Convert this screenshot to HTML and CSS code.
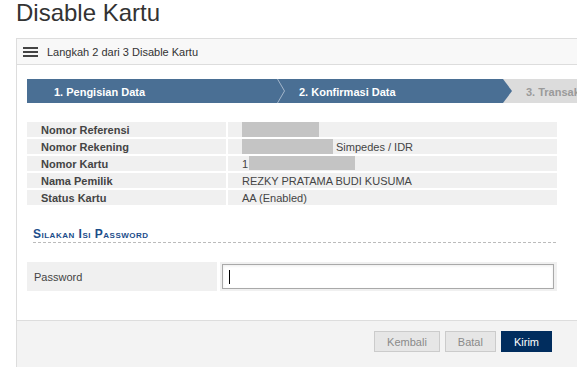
FILE: index.html
```html
<!DOCTYPE html>
<html lang="id">
<head>
    <meta charset="UTF-8">
    <meta name="viewport" content="width=device-width, initial-scale=1.0">
    <title>Disable Kartu</title>
    <link rel="stylesheet" href="styles.css">
</head>
<body>
    <h1 class="page-title">Disable Kartu</h1>

    <div class="panel">
        <div class="panel-head">
            <span class="menu-icon"><i></i><i></i><i></i></span>
            <span class="panel-head-text">Langkah 2 dari 3 Disable Kartu</span>
        </div>

        <div class="panel-body">
            <div class="steps">
                <div class="step step-done">1. Pengisian Data</div>
                <svg class="step-sep" width="8" height="24" viewBox="0 0 8 24">
                    <polyline points="0.5,0 7.5,12 0.5,24" fill="none" stroke="#a3b6ca" stroke-width="1"/>
                </svg>
                <div class="step step-active">2. Konfirmasi Data</div>
                <svg class="step-arrow" width="9" height="24" viewBox="0 0 9 24">
                    <polygon points="0,0 9,12 0,24" fill="#4a6f94"/>
                </svg>
                <div class="step step-todo">3. Transaksi Selesai</div>
            </div>

            <div class="info-table">
                <div class="info-label">Nomor Referensi</div>
                <div class="info-value"><span class="masked masked-ref"></span></div>

                <div class="info-label">Nomor Rekening</div>
                <div class="info-value"><span class="masked masked-acc"></span><span class="after-mask">Simpedes / IDR</span></div>

                <div class="info-label">Nomor Kartu</div>
                <div class="info-value">1<span class="masked masked-card"></span></div>

                <div class="info-label">Nama Pemilik</div>
                <div class="info-value">REZKY PRATAMA BUDI KUSUMA</div>

                <div class="info-label">Status Kartu</div>
                <div class="info-value">AA (Enabled)</div>
            </div>

            <div class="section-title">Silakan Isi Password</div>

            <div class="form-row">
                <div class="form-label">Password</div>
                <div class="form-field">
                    <input type="password" class="text-input">
                    <span class="caret"></span>
                </div>
            </div>
        </div>

        <div class="panel-foot">
            <div class="form-actions">
                <button class="btn btn-light">Kembali</button>
                <button class="btn btn-light">Batal</button>
                <button class="btn btn-primary">Kirim</button>
            </div>
        </div>
    </div>
</body>
</html>
```

FILE: styles.css
```css
* {
    margin: 0;
    padding: 0;
    box-sizing: border-box;
}

body {
    font-family: 'Liberation Sans', Arial, sans-serif;
    font-size: 11px;
    color: #444;
    background: #fff;
    padding: 0 0 0 16px;
    overflow: hidden;
}

.page-title {
    font-size: 24px;
    font-weight: normal;
    line-height: 26px;
    color: #333;
    margin-bottom: 12px;
}

.panel {
    width: 620px;
    border: 1px solid #ddd;
    border-right: none;
    background: #fff;
}

.panel-head {
    height: 26px;
    background: #f8f8f8;
    border-bottom: 1px solid #ddd;
    display: flex;
    align-items: center;
    padding-left: 6px;
    color: #333;
}

.menu-icon {
    display: flex;
    flex-direction: column;
    gap: 2px;
    width: 15px;
    margin-right: 9px;
    margin-top: 1px;
}

.menu-icon i {
    display: block;
    height: 2px;
    background: #444;
}

.panel-body {
    padding: 14px 10px 29px 10px;
}

.steps {
    display: flex;
    height: 24px;
}

.steps > * {
    flex-shrink: 0;
}

.step {
    font-weight: bold;
    line-height: 22px;
    padding-top: 2px;
    white-space: nowrap;
    color: #fff;
}

.step-done {
    width: 250px;
    padding-left: 27px;
    background: #4a6f94;
}

.step-sep {
    background: #4a6f94;
    display: block;
}

.step-active {
    width: 218px;
    padding-left: 14px;
    background: #4a6f94;
}

.step-arrow {
    background: #dcdcdc;
    display: block;
}

.step-todo {
    flex: 1 0 auto;
    padding-left: 14px;
    background: #dcdcdc;
    color: #9a9a9a;
}

.info-table {
    display: grid;
    grid-template-columns: 199px 329px;
    gap: 2px;
    margin-top: 19px;
}

.info-label,
.info-value {
    height: 15px;
    line-height: 16px;
    background: #f0f0f0;
    padding-left: 14px;
    white-space: nowrap;
}

.info-label {
    font-weight: bold;
}

.masked {
    display: inline-block;
    height: 15px;
    vertical-align: top;
    background: #c4c4c4;
}

.masked-ref {
    width: 77px;
}

.masked-acc {
    width: 91px;
}

.masked-card {
    width: 106px;
    height: 14px;
    margin-left: 1px;
}

.after-mask {
    margin-left: 3px;
}

.section-title {
    width: 523px;
    margin: 22px 0 0 6px;
    font-weight: bold;
    font-variant: small-caps;
    font-size: 12px;
    letter-spacing: 0.5px;
    line-height: 15px;
    color: #1b4d8a;
    border-bottom: 1px dashed #bbb;
}

.form-row {
    display: flex;
    gap: 3px;
    margin-top: 19px;
    width: 530px;
}

.form-label {
    width: 190px;
    height: 29px;
    line-height: 27px;
    padding: 2px 0 0 7px;
    background: #f0f0f0;
}

.form-field {
    flex: 1;
    position: relative;
    padding: 2px 3px 2px 2px;
    background: #f0f0f0;
}

.text-input {
    display: block;
    width: 100%;
    height: 25px;
    border: 1px solid #a9a9a9;
    box-shadow: inset 0 1px 3px rgba(0, 0, 0, 0.08);
    background: #fff;
    outline: none;
}

.caret {
    position: absolute;
    left: 9px;
    top: 8px;
    width: 1px;
    height: 14px;
    background: #000;
}

.panel-foot {
    background: #f3f3f3;
    border-top: 1px solid #ddd;
    padding: 10px 10px 16px 10px;
}

.form-actions {
    width: 525px;
    display: flex;
    justify-content: flex-end;
    gap: 5px;
}

.btn {
    height: 21px;
    padding: 0 12px;
    font-family: 'Liberation Sans', Arial, sans-serif;
    font-size: 11px;
    cursor: pointer;
}

.btn-light {
    background: #e6e6e6;
    border: 1px solid #cbcbcb;
    color: #8a8a8a;
}

.btn-primary {
    background: #012d5e;
    border: 1px solid #012d5e;
    color: #fff;
}
```
